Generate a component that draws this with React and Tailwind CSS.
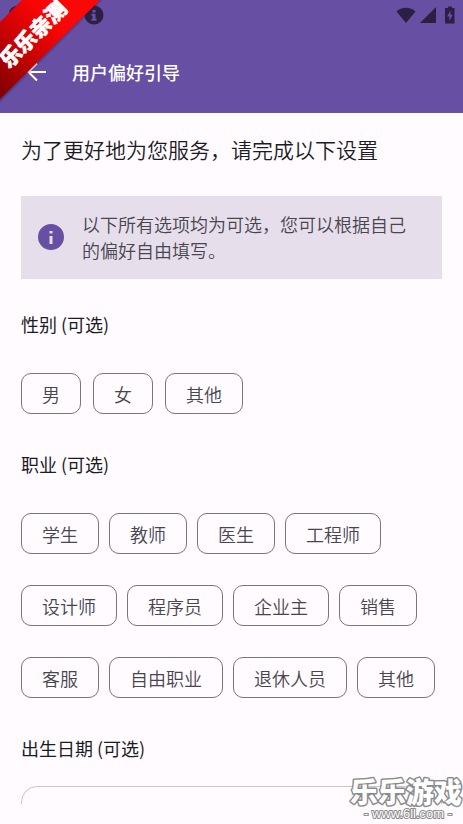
const GENDERS = ["男", "女", "其他"];

const JOBS = [
  "学生", "教师", "医生", "工程师",
  "设计师", "程序员", "企业主", "销售",
  "客服", "自由职业", "退休人员", "其他",
];

function InfoIcon({ className }) {
  return (
    <svg className={className} viewBox="0 0 26 26" fill="currentColor" fillRule="evenodd" aria-hidden="true">
      <path d="M13 0a13 13 0 100 26 13 13 0 000-26zM11.500 7h3v2.500h-3zM11.500 12h3v8h-3z" />
    </svg>
  );
}

function NoticeIcon({ className }) {
  return (
    <svg className={className} viewBox="0 0 20 20" fill="currentColor" fillRule="evenodd" aria-hidden="true">
      <path d="M10 0.500a9.500 9.500 0 100 19 9.500 9.500 0 000-19zM8.500 5h3v2.500h-3zM7.500 8.800h4v5h1v2h-5v-2h1v-3h-1z" />
    </svg>
  );
}

function StatusBar() {
  return (
    <div className="flex h-[30px] items-center pr-[7px] pl-2 text-[#2b2044]">
      <NoticeIcon className="size-5" />
      <NoticeIcon className="ml-14 size-5" />
      <div className="ml-auto flex items-center">
        <svg className="h-4 w-5" viewBox="0 0 20 16" fill="currentColor">
          <path d="M10 16L0.5 4.400C3 2 6.300 0.700 10 0.700s7 1.300 9.500 3.700L10 16z" />
        </svg>
        <svg className="ml-1 size-4" viewBox="0 0 16 16" fill="currentColor">
          <path d="M0 16L16 0v16z" />
        </svg>
        <svg className="ml-2 h-[18px] w-3" viewBox="0 0 12 18" fill="currentColor" fillRule="evenodd">
          <path d="M4 0.500h4V2H10.500v15.500H1V2h3V0.500zM6.500 4.500L3.200 10.500h2.200v4.500L8.800 8.800H6.500V4.500z" />
        </svg>
      </div>
    </div>
  );
}

function Ribbon() {
  return (
    <svg className="pointer-events-none absolute top-0 left-0 size-[106px]" viewBox="0 0 106 106">
      <defs>
        <linearGradient id="ribbon" gradientUnits="userSpaceOnUse" x1="0" y1="90" x2="80" y2="10">
          <stop offset="0" stopColor="#860000" />
          <stop offset="0.4" stopColor="#c80303" />
          <stop offset="0.75" stopColor="#fa0505" />
          <stop offset="1" stopColor="#fa0808" />
        </linearGradient>
        <linearGradient id="ribbon-shadow" gradientUnits="userSpaceOnUse" x1="48" y1="48" x2="52" y2="52">
          <stop offset="0" stopColor="#2a1245" stopOpacity="0.7" />
          <stop offset="1" stopColor="#2a1245" stopOpacity="0" />
        </linearGradient>
      </defs>
      <path d="M0 104L104 0H94L0 94z" fill="url(#ribbon-shadow)" />
      <path d="M0 22L22 0H100L0 99z" fill="url(#ribbon)" />
      <text
        transform="translate(33 34) rotate(-45)"
        y="8"
        textAnchor="middle"
        fill="#fff"
        stroke="#fff"
        strokeWidth="0.6"
        fontSize="21"
        fontWeight="900"
      >
        乐乐亲测
      </text>
    </svg>
  );
}

function Chip({ label }) {
  return (
    <button
      type="button"
      className="h-[41px] rounded-[10px] border border-[#79747e] px-5 text-[18px] leading-6 font-[350] whitespace-nowrap text-[#49454f]"
    >
      {label}
    </button>
  );
}

function ChipGroup({ title, options, className }) {
  return (
    <section>
      <h2 className="text-[18px] leading-6 text-[#1c1b1f]">{title}</h2>
      <div className={`mt-[37px] flex flex-wrap gap-y-[31px] ${className}`}>
        {options.map((option) => (
          <Chip key={option} label={option} />
        ))}
      </div>
    </section>
  );
}

function Watermark() {
  return (
    <svg
      className="pointer-events-none absolute right-0 bottom-0 h-14 w-[114px]"
      viewBox="0 0 114 56"
      fill="#fff"
      stroke="#8b8b8b"
      strokeLinejoin="round"
      textAnchor="middle"
      paintOrder="stroke"
    >
      <text x="57" y="35" fontSize="28" fontWeight="900" strokeWidth="3">乐乐游戏</text>
      <text x="59" y="50" fontSize="13" strokeWidth="2" fontFamily="Liberation Sans, sans-serif">- www.6ll.com -</text>
    </svg>
  );
}

export default function App() {
  return (
    <div className="relative min-h-screen overflow-hidden bg-[#fffbff] font-['Noto_Sans_CJK_SC',sans-serif]">
      <header className="bg-[#6750a4]">
        <StatusBar />
        <div className="flex h-[83px] items-center pl-[26px] text-white">
          <button type="button" aria-label="返回" className="size-[22px]">
            <svg className="size-full" viewBox="0 0 22 22" fill="none" stroke="currentColor" strokeWidth="2">
              <path d="M20 11H3M11 2.500L2.500 11l8.500 8.500" />
            </svg>
          </button>
          <h1 className="ml-6 text-[18px] leading-6 font-medium">用户偏好引导</h1>
        </div>
      </header>

      <main className="px-[21px] pt-[22px]">
        <p className="text-[21px] leading-7 font-[350] text-[#1c1b1f]">为了更好地为您服务，请完成以下设置</p>

        <div className="mt-[33px] flex items-center bg-[#e6dfeb] pt-[15px] pb-4 pr-5 pl-[17px] text-[#49454f]">
          <InfoIcon className="size-[26px] shrink-0 text-[#6750a4]" />
          <p className="ml-[18px] text-[18px] leading-[26px] font-[350]">以下所有选项均为可选，您可以根据自己的偏好自由填写。</p>
        </div>

        <div className="mt-[33px] flex flex-col gap-[38px]">
          <ChipGroup title="性别 (可选)" options={GENDERS} className="gap-x-3" />
          <ChipGroup title="职业 (可选)" options={JOBS} className="gap-x-[10px]" />
          <section>
            <label htmlFor="birthday" className="block text-[18px] leading-6 text-[#1c1b1f]">
              出生日期 (可选)
            </label>
            <div className="mt-[26px] h-[18px] overflow-hidden">
              <input id="birthday" type="text" className="h-16 w-full rounded-2xl border border-[#cac4d0] px-4" />
            </div>
          </section>
        </div>
      </main>

      <Ribbon />
      <Watermark />
    </div>
  );
}
